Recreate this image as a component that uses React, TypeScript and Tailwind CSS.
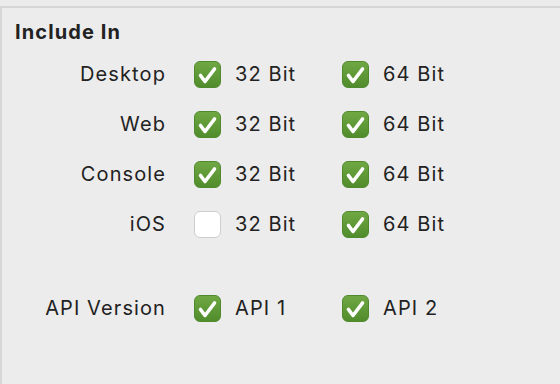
import React from 'react'

const ROWS = [
  { label: 'Desktop', a: '32 Bit', b: '64 Bit', ca: true, cb: true },
  { label: 'Web', a: '32 Bit', b: '64 Bit', ca: true, cb: true },
  { label: 'Console', a: '32 Bit', b: '64 Bit', ca: true, cb: true },
  { label: 'iOS', a: '32 Bit', b: '64 Bit', ca: false, cb: true },
]

function Check({ on }: { on: boolean }) {
  if (!on) {
    return <div className="w-[27px] h-[27px] rounded-[6px] bg-white border border-[#cdcdcd] shrink-0" />
  }
  return (
    <div className="w-[27px] h-[27px] rounded-[6px] bg-gradient-to-b from-[#6fa843] to-[#518c2c] border border-[#4f8a2d] flex items-center justify-center shrink-0">
      <svg width="27" height="27" viewBox="0 0 27 27" className="-m-px">
        <path d="M6.5 14.5 L11 20.5 L20.5 8" fill="none" stroke="white" strokeWidth="3.6" strokeLinecap="round" strokeLinejoin="round" />
      </svg>
    </div>
  )
}

function Option({ on, text }: { on: boolean; text: string }) {
  return (
    <div className="w-[148px] flex items-center gap-[14px]">
      <Check on={on} />
      <span>{text}</span>
    </div>
  )
}

function Row({ label, children, className = '' }: { label: string; children: React.ReactNode; className?: string }) {
  return (
    <div className={`flex items-center h-[50px] ${className}`}>
      <div className="w-[164px] text-right">{label}</div>
      <div className="ml-[28px] flex">{children}</div>
    </div>
  )
}

export default function App() {
  return (
    <div
      className="w-[560px] h-[384px] bg-[#ececec] flex flex-col text-[#222] text-[20px] tracking-[1.1px] overflow-hidden"
      style={{ fontFamily: 'Inter, "Noto Sans", sans-serif' }}
    >
      <div className="h-[6px] bg-[#ebebeb] shrink-0" />
      <div className="h-[2px] bg-[#d6d6d6] shrink-0" />
      <div className="flex-1 border-l-2 border-[#d6d6d6] bg-[#ececec]">
        <h2 className="font-bold text-[20px] leading-[24px] pl-[13px] pt-[12px]">Include In</h2>
        <div className="mt-[5px]">
          {ROWS.map(r => (
            <Row key={r.label} label={r.label}>
              <Option on={r.ca} text={r.a} />
              <Option on={r.cb} text={r.b} />
            </Row>
          ))}
          <Row label="API Version" className="mt-[34px]">
            <Option on text="API 1" />
            <Option on text="API 2" />
          </Row>
        </div>
      </div>
    </div>
  )
}
